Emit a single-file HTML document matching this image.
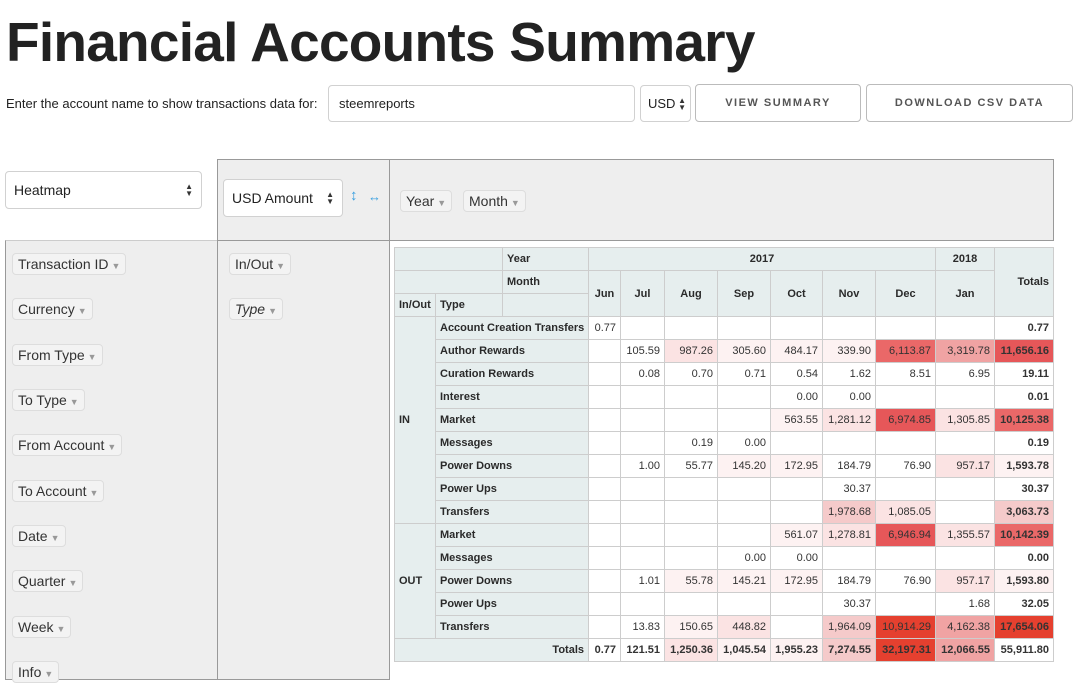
<!DOCTYPE html>
<html><head><meta charset="utf-8"><style>
*{box-sizing:border-box}
body{margin:0;width:1082px;height:671px;overflow:hidden;background:#fff;font-family:"Liberation Sans",Arial,sans-serif;color:#222;position:relative}
.abs{position:absolute}
h1{position:absolute;left:6px;top:10px;margin:0;font-size:55px;font-weight:bold;letter-spacing:-0.75px;color:#222}
.lbl{left:6px;top:96px;font-size:13px}
.inp{border:1px solid #d1d1d1;border-radius:4px;background:#fff}
.btn{border:1px solid #bbb;border-radius:4px;background:#fff;font-size:11px;font-weight:bold;letter-spacing:1.5px;color:#555;text-align:center;line-height:36px}
.arr{position:absolute;right:8px;top:50%;transform:translateY(-50%);font-size:8px;line-height:7px;color:#333}
.pill{position:absolute;background:#f3f3f3;border:1px solid #ddd;border-radius:4px;padding:2px 5px;font-size:14px;color:#333;white-space:nowrap}
.pill i{font-style:normal;color:#999;font-size:9px;margin-left:3px}
table{position:absolute;left:394px;top:247px;border-collapse:collapse;font-size:11px;table-layout:fixed;width:659px}
td,th{border:1px solid #cdcdcd;height:23px;padding:0 4px;white-space:nowrap;overflow:hidden}
th{background:#e6eeee;font-weight:bold;text-align:left;color:#2a2a2a}
td{text-align:right;color:#333}
.c{text-align:center}
.tb{font-weight:bold}
.h1{background:#e5402f}.h2{background:#e65759}.h3{background:#ea6868}.h4{background:#f0a3a3}.h5{background:#f5caca}.h6{background:#fbe3e3}.h7{background:#fdf2f2}
</style></head><body>
<h1>Financial Accounts Summary</h1>
<div class="abs lbl">Enter the account name to show transactions data for:</div>
<div class="abs inp" style="left:328px;top:85px;width:307px;height:37px;font-size:13px;padding:10px 10px">steemreports</div>
<div class="abs inp" style="left:640px;top:85px;width:51px;height:37px;font-size:13px;padding:10px 7px">USD<span class="arr" style="right:4px">▲<br>▼</span></div>
<div class="abs btn" style="left:695px;top:84px;width:166px;height:38px">VIEW SUMMARY</div>
<div class="abs btn" style="left:866px;top:84px;width:207px;height:38px">DOWNLOAD CSV DATA</div>

<div class="abs inp" style="left:5px;top:171px;width:197px;height:38px;font-size:14px;padding:10px 8px">Heatmap<span class="arr">▲<br>▼</span></div>
<div class="abs" style="left:217px;top:159px;width:173px;height:82px;background:#eee;border:1px solid #999"></div>
<div class="abs" style="left:389px;top:159px;width:665px;height:82px;background:#eee;border:1px solid #999"></div>
<div class="abs" style="left:5px;top:240px;width:213px;height:440px;background:#eee;border:1px solid #999;border-top-color:#ccc"></div>
<div class="abs" style="left:217px;top:240px;width:173px;height:440px;background:#eee;border:1px solid #999"></div>
<div class="abs inp" style="left:223px;top:179px;width:120px;height:38px;font-size:14px;padding:10px 8px">USD Amount<span class="arr">▲<br>▼</span></div>
<div class="abs" style="left:350px;top:187px;color:#3aa0e0;font-size:15px">↕</div>
<div class="abs" style="left:368px;top:189px;color:#3aa0e0;font-size:13px">↔</div>
<div class="pill" style="left:400px;top:190px">Year<i>▼</i></div>
<div class="pill" style="left:463px;top:190px">Month<i>▼</i></div>

<div class="pill" style="left:12px;top:253px">Transaction ID<i>▼</i></div>
<div class="pill" style="left:12px;top:298px">Currency<i>▼</i></div>
<div class="pill" style="left:12px;top:344px">From Type<i>▼</i></div>
<div class="pill" style="left:12px;top:389px">To Type<i>▼</i></div>
<div class="pill" style="left:12px;top:434px">From Account<i>▼</i></div>
<div class="pill" style="left:12px;top:480px">To Account<i>▼</i></div>
<div class="pill" style="left:12px;top:525px">Date<i>▼</i></div>
<div class="pill" style="left:12px;top:570px">Quarter<i>▼</i></div>
<div class="pill" style="left:12px;top:616px">Week<i>▼</i></div>
<div class="pill" style="left:12px;top:661px">Info<i>▼</i></div>
<div class="pill" style="left:229px;top:253px">In/Out<i>▼</i></div>
<div class="pill" style="left:229px;top:298px"><span style="font-style:italic">Type</span><i>▼</i></div>

<table>
<colgroup><col style="width:41px"><col style="width:67px"><col style="width:86px"><col style="width:32px"><col style="width:44px"><col style="width:53px"><col style="width:53px"><col style="width:52px"><col style="width:53px"><col style="width:60px"><col style="width:59px"><col style="width:59px"></colgroup>
<tr><th colspan="2"></th><th>Year</th><th colspan="7" class="c">2017</th><th class="c">2018</th><th rowspan="3" style="text-align:right">Totals</th></tr>
<tr><th colspan="2" style="border-bottom:none"></th><th>Month</th><th rowspan="2" class="c">Jun</th><th rowspan="2" class="c">Jul</th><th rowspan="2" class="c">Aug</th><th rowspan="2" class="c">Sep</th><th rowspan="2" class="c">Oct</th><th rowspan="2" class="c">Nov</th><th rowspan="2" class="c">Dec</th><th rowspan="2" class="c">Jan</th></tr>
<tr><th>In/Out</th><th>Type</th><th></th></tr>
<tr><th rowspan="9">IN</th><th colspan="2">Account Creation Transfers</th><td>0.77</td><td></td><td></td><td></td><td></td><td></td><td></td><td></td><td class="tb">0.77</td></tr>
<tr><th colspan="2">Author Rewards</th><td></td><td>105.59</td><td class="h6">987.26</td><td class="h7">305.60</td><td class="h7">484.17</td><td class="h7">339.90</td><td class="h3">6,113.87</td><td class="h4">3,319.78</td><td class="tb h2">11,656.16</td></tr>
<tr><th colspan="2">Curation Rewards</th><td></td><td>0.08</td><td>0.70</td><td>0.71</td><td>0.54</td><td>1.62</td><td>8.51</td><td>6.95</td><td class="tb">19.11</td></tr>
<tr><th colspan="2">Interest</th><td></td><td></td><td></td><td></td><td>0.00</td><td>0.00</td><td></td><td></td><td class="tb">0.01</td></tr>
<tr><th colspan="2">Market</th><td></td><td></td><td></td><td></td><td class="h7">563.55</td><td class="h6">1,281.12</td><td class="h2">6,974.85</td><td class="h6">1,305.85</td><td class="tb h3">10,125.38</td></tr>
<tr><th colspan="2">Messages</th><td></td><td></td><td>0.19</td><td>0.00</td><td></td><td></td><td></td><td></td><td class="tb">0.19</td></tr>
<tr><th colspan="2">Power Downs</th><td></td><td>1.00</td><td>55.77</td><td class="h7">145.20</td><td class="h7">172.95</td><td>184.79</td><td>76.90</td><td class="h6">957.17</td><td class="tb h7">1,593.78</td></tr>
<tr><th colspan="2">Power Ups</th><td></td><td></td><td></td><td></td><td></td><td>30.37</td><td></td><td></td><td class="tb">30.37</td></tr>
<tr><th colspan="2">Transfers</th><td></td><td></td><td></td><td></td><td></td><td class="h5">1,978.68</td><td class="h6">1,085.05</td><td></td><td class="tb h5">3,063.73</td></tr>
<tr><th rowspan="5">OUT</th><th colspan="2">Market</th><td></td><td></td><td></td><td></td><td class="h7">561.07</td><td class="h6">1,278.81</td><td class="h2">6,946.94</td><td class="h6">1,355.57</td><td class="tb h3">10,142.39</td></tr>
<tr><th colspan="2">Messages</th><td></td><td></td><td></td><td>0.00</td><td>0.00</td><td></td><td></td><td></td><td class="tb">0.00</td></tr>
<tr><th colspan="2">Power Downs</th><td></td><td>1.01</td><td class="h7">55.78</td><td class="h7">145.21</td><td class="h7">172.95</td><td>184.79</td><td>76.90</td><td class="h6">957.17</td><td class="tb h7">1,593.80</td></tr>
<tr><th colspan="2">Power Ups</th><td></td><td></td><td></td><td></td><td></td><td>30.37</td><td></td><td>1.68</td><td class="tb">32.05</td></tr>
<tr><th colspan="2">Transfers</th><td></td><td>13.83</td><td class="h7">150.65</td><td class="h6">448.82</td><td></td><td class="h5">1,964.09</td><td class="h1">10,914.29</td><td class="h4">4,162.38</td><td class="tb h1">17,654.06</td></tr>
<tr><th colspan="3" style="text-align:right">Totals</th><td class="tb">0.77</td><td class="tb">121.51</td><td class="tb h6">1,250.36</td><td class="tb h7">1,045.54</td><td class="tb h7">1,955.23</td><td class="tb h5">7,274.55</td><td class="tb h1">32,197.31</td><td class="tb h4">12,066.55</td><td class="tb">55,911.80</td></tr>
</table>
</body></html>
